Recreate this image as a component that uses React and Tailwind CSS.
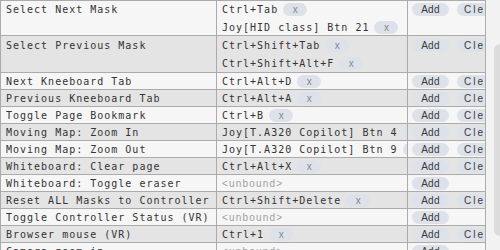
const rows = [
  { name: 'Select Next Mask', binds: ['Ctrl+Tab', 'Joy[HID class] Btn 21'] },
  { name: 'Select Previous Mask', binds: ['Ctrl+Shift+Tab', 'Ctrl+Shift+Alt+F'] },
  { name: 'Next Kneeboard Tab', binds: ['Ctrl+Alt+D'] },
  { name: 'Previous Kneeboard Tab', binds: ['Ctrl+Alt+A'] },
  { name: 'Toggle Page Bookmark', binds: ['Ctrl+B'] },
  { name: 'Moving Map: Zoom In', binds: ['Joy[T.A320 Copilot] Btn 4'] },
  { name: 'Moving Map: Zoom Out', binds: ['Joy[T.A320 Copilot] Btn 9'] },
  { name: 'Whiteboard: Clear page', binds: ['Ctrl+Alt+X'] },
  { name: 'Whiteboard: Toggle eraser', binds: [] },
  { name: 'Reset ALL Masks to Controller', binds: ['Ctrl+Shift+Delete'] },
  { name: 'Toggle Controller Status (VR)', binds: [] },
  { name: 'Browser mouse (VR)', binds: ['Ctrl+1'] },
  { name: 'Camera zoom in', binds: [] },
]

const mono = "font-['DejaVu_Sans_Mono',monospace] text-[10px] tracking-[1px] text-[#333]"
const sans = "font-['Liberation_Sans',sans-serif] text-[10px]"

function Pill({ children, className = '' }) {
  return (
    <span className={`flex h-[13px] shrink-0 items-center rounded-full bg-[#dde1e9] ${className}`}>
      {children}
    </span>
  )
}

function BindLine({ text }) {
  return (
    <div className="flex h-[16px] items-center whitespace-nowrap">
      <span className={mono}>{text}</span>
      <Pill className={`ml-[5px] w-[24px] justify-center text-[#888] ${sans}`}>x</Pill>
    </div>
  )
}

function Row({ row, index }) {
  const double = row.binds.length > 1
  const bg = index % 2 === 0 ? 'bg-[#f6f6f6]' : 'bg-[#e4e4e4]'
  const pad = index === 0 ? '' : 'pt-[1px] pb-[1px]'
  return (
    <div className={`flex border-b border-[#ababab] ${bg} ${index === 0 ? 'border-t' : ''}`}>
      <div className={`w-[216px] shrink-0 border-r border-[#ababab] pl-[5px] ${double ? pad : ''}`}>
        <div className={`flex h-[16px] items-center whitespace-nowrap ${mono}`}>{row.name}</div>
      </div>
      <div className={`flex w-[191px] shrink-0 flex-col gap-[2px] overflow-hidden border-r border-[#ababab] pl-[5px] ${double ? pad : ''}`}>
        {row.binds.length === 0 && (
          <div className={`flex h-[16px] items-center tracking-[1.2px] text-[#a0a0a0] ${sans}`}>&lt;unbound&gt;</div>
        )}
        {row.binds.map((b) => (
          <BindLine key={b} text={b} />
        ))}
      </div>
      <div className={`w-[78px] shrink-0 overflow-hidden border-r border-[#ababab] ${double ? pad : ''}`}>
        <div className="flex h-[16px] items-center whitespace-nowrap pl-[4px]">
          <Pill className={`w-[37px] justify-center tracking-[0.3px] text-[#3a3a3a] ${sans}`}>Add</Pill>
          {row.binds.length > 0 && (
            <Pill className={`ml-[8px] w-[40px] pl-[7px] tracking-[2px] text-[#3a3a3a] ${sans}`}>Clear</Pill>
          )}
        </div>
      </div>
    </div>
  )
}

export default function App() {
  return (
    <div className="flex h-[250px] w-[500px] overflow-hidden bg-[#f2f2f2]">
      <div className="flex w-[486px] shrink-0 flex-col border-l border-[#ababab]">
        {rows.map((row, i) => (
          <Row key={row.name} row={row} index={i} />
        ))}
      </div>
      <div className="flex flex-1 justify-end pt-[44px] pb-[14px]">
        <div className="h-full w-[6px] rounded-l-full bg-[#dcdcdc]" />
      </div>
    </div>
  )
}
